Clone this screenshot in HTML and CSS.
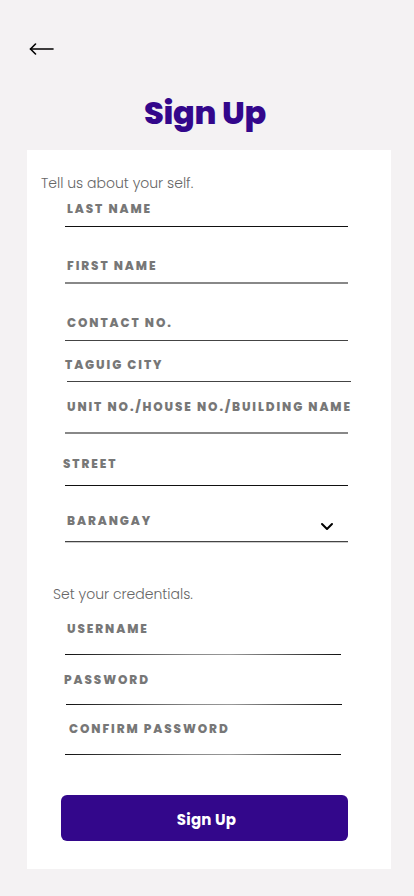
FILE: index.html
```html
<!DOCTYPE html>
<html lang="en">
<head>
<meta charset="utf-8">
<meta name="viewport" content="width=device-width, initial-scale=1">
<title>Sign Up</title>
<link rel="stylesheet" href="styles.css">
</head>
<body>
<div class="page">
  <header class="top">
    <button class="back" aria-label="Back">
      <svg width="25" height="12" viewBox="0 0 25 12" fill="none" stroke="#000" stroke-width="1.6" stroke-linecap="round" stroke-linejoin="round"><path d="M1.5 6H24"/><path d="M6.5 1L1.5 6L6.5 11"/></svg>
    </button>
  </header>
  <h1 class="title">Sign Up</h1>
  <main class="card">
    <p class="intro">Tell us about your self.</p>
    <div class="field f1 line-dark"><span class="label">LAST NAME</span></div>
    <div class="field f2 line-grey"><span class="label">FIRST NAME</span></div>
    <div class="field f3 line-mid"><span class="label">CONTACT NO.</span></div>
    <div class="field f4 line-mid shift"><span class="label nudge-left">TAGUIG CITY</span></div>
    <div class="field f5 line-grey"><span class="label">UNIT NO./HOUSE NO./BUILDING NAME</span></div>
    <div class="field f6 line-dark"><span class="label nudge-left">STREET</span></div>
    <div class="field f7 line-mid select">
      <span class="label">BARANGAY</span>
      <svg class="chev" width="14" height="9" viewBox="0 0 14 9" fill="none" stroke="#000" stroke-width="2" stroke-linecap="round" stroke-linejoin="round"><path d="M2 2L7 7L12 2"/></svg>
    </div>
    <p class="intro cred">Set your credentials.</p>
    <div class="field cr f8"><span class="label">USERNAME</span></div>
    <div class="field cr f9"><span class="label nudge-left">PASSWORD</span></div>
    <div class="field cr f10"><span class="label nudge-right">CONFIRM PASSWORD</span></div>
    <button class="submit">Sign Up</button>
  </main>
</div>
</body>
</html>
```
FILE: styles.css
```css
* { box-sizing: border-box; }
html, body { margin: 0; padding: 0; }
body {
  background: #f4f2f3;
  font-family: "Poppins", "Inter", "Noto Sans", sans-serif;
  width: 414px;
  height: 896px;
  overflow: hidden;
}
.page { display: flex; flex-direction: column; }
.top { height: 60px; padding: 43px 0 0 29px; }
.back {
  border: 0; background: none; padding: 0; margin: 0;
  display: block; line-height: 0; cursor: pointer;
}
.title {
  margin: 33px 0 0;
  padding-right: 4px;
  height: 57px;
  text-align: center;
  font-size: 32px;
  line-height: 40px;
  font-weight: 800;
  color: #33078b;
  letter-spacing: -0.3px;
}
.card {
  background: #fff;
  margin-left: 27px;
  width: 364px;
  padding: 23px 0 28px;
  display: flex;
  flex-direction: column;
}
.intro {
  margin: 0 0 0 14px;
  font-size: 14px;
  line-height: 20px;
  font-weight: 300;
  color: #666;
}
.intro.cred { margin: 0 0 0 26px; }
.field {
  margin-left: 38px;
  width: 283px;
  display: flex;
  align-items: flex-start;
  justify-content: space-between;
}
.label {
  display: block;
  font-size: 12px;
  line-height: 18px;
  font-weight: 800;
  letter-spacing: 1.9px;
  color: #777;
  padding-left: 2px;
  white-space: nowrap;
}
.nudge-left { padding-left: 0; margin-left: -2px; }
.nudge-right { padding-left: 4px; }
.line-dark { border-bottom: 1.5px solid #111; }
.line-mid { border-bottom: 1.5px solid #444; }
.line-grey { border-bottom: 2px solid #888; }
.shift { margin-left: 40px; width: 284px; }
.f1 { margin-top: 7px; padding-bottom: 8px; }
.f2 { margin-top: 30px; padding-bottom: 7px; }
.f3 { margin-top: 30px; padding-bottom: 8px; }
.f4 { margin-top: 15px; padding-bottom: 7px; }
.f5 { margin-top: 16px; padding-bottom: 16px; }
.f6 { margin-top: 21px; padding-bottom: 12px; }
.f7 { margin-top: 26px; padding-bottom: 10px; box-shadow: 0 1px 0 #ccc; }
.chev { margin: 10px 14px 0 0; }
.cred { margin-top: 42px !important; }
.cr {
  width: 276px;
  border-bottom: 0;
  background: linear-gradient(90deg, #111 0%, #888 45%, #999 60%, #111 100%) bottom / 100% 1.5px no-repeat;
}
.f8 { margin-top: 16px; padding-bottom: 17px; }
.f9 { margin-top: 16px; padding-bottom: 16px; margin-left: 39px; }
.f10 { margin-top: 15px; padding-bottom: 17px; }
.submit {
  margin: 40px 0 0 34px;
  width: 287px;
  height: 46px;
  border: 0;
  border-radius: 6px;
  background: #33078b;
  color: #fff;
  font-family: "Poppins", "Inter", "Noto Sans", sans-serif;
  font-size: 15px;
  font-weight: 700;
  letter-spacing: 0.2px;
  padding: 3px 0 0 4px;
  cursor: pointer;
}
```
